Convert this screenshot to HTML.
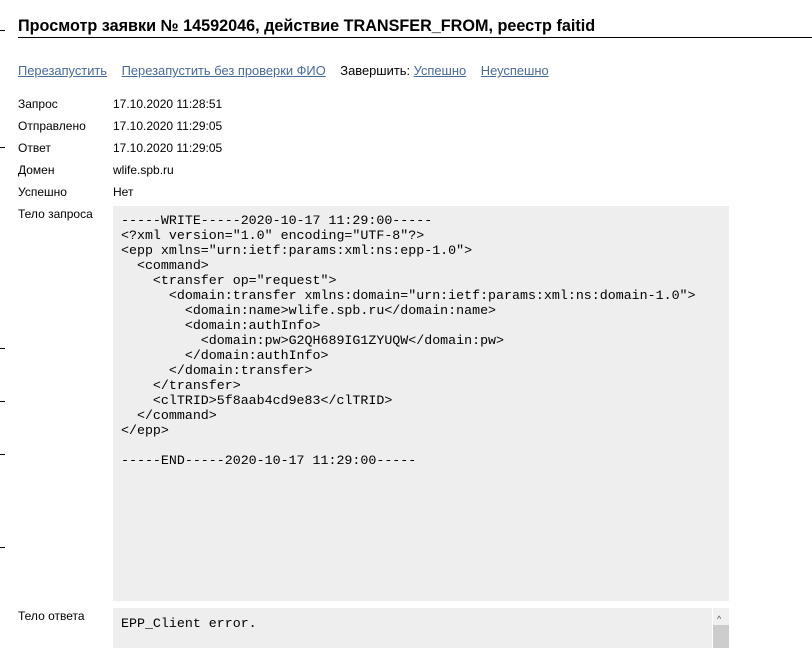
<!DOCTYPE html>
<html><head><meta charset="utf-8"><style>
body{margin:0;width:812px;height:635px;overflow:hidden;background:#fff;font-family:"Liberation Sans",Arial,sans-serif;font-size:12px;color:#000;position:relative}
.t{position:absolute;left:0;width:5px;height:1px;background:#000}
h1{position:absolute;left:18px;top:17px;margin:0;font-size:16.2px;font-weight:bold;white-space:nowrap}
.line{position:absolute;left:18px;right:0;top:37px;height:1px;background:#000}
.links{position:absolute;left:18px;top:63px;font-size:12.9px;white-space:nowrap}
.links a{color:#4a6a9a;text-decoration:underline;margin-right:11px}
.lab{position:absolute;left:18px;font-size:12px}
.val{position:absolute;left:113px;font-size:12px}
.box{position:absolute;left:113px;width:616px;background:#eeeeee}
pre{margin:0;font-family:"Liberation Mono",monospace;font-size:13.3px;line-height:15px;color:#000}
</style></head><body>
<div class="t" style="top:30px"></div>
<div class="t" style="top:147px"></div>
<div class="t" style="top:348px"></div>
<div class="t" style="top:401px"></div>
<div class="t" style="top:454px"></div>
<div class="t" style="top:547px"></div>
<h1>Просмотр заявки № 14592046, действие TRANSFER_FROM, реестр faitid</h1>
<div class="line"></div>
<div class="links"><a>Перезапустить</a> <a>Перезапустить без проверки ФИО</a> Завершить: <a>Успешно</a> <a>Неуспешно</a></div>
<div class="lab" style="top:97px">Запрос</div><div class="val" style="top:97px">17.10.2020 11:28:51</div>
<div class="lab" style="top:119px">Отправлено</div><div class="val" style="top:119px">17.10.2020 11:29:05</div>
<div class="lab" style="top:141px">Ответ</div><div class="val" style="top:141px">17.10.2020 11:29:05</div>
<div class="lab" style="top:163px">Домен</div><div class="val" style="top:163px">wlife.spb.ru</div>
<div class="lab" style="top:185px">Успешно</div><div class="val" style="top:185px">Нет</div>
<div class="lab" style="top:207px">Тело запроса</div>
<div class="box" style="top:206px;height:395px"><pre style="padding:7px 0 0 8px">-----WRITE-----2020-10-17 11:29:00-----
&lt;?xml version="1.0" encoding="UTF-8"?&gt;
&lt;epp xmlns="urn:ietf:params:xml:ns:epp-1.0"&gt;
  &lt;command&gt;
    &lt;transfer op="request"&gt;
      &lt;domain:transfer xmlns:domain="urn:ietf:params:xml:ns:domain-1.0"&gt;
        &lt;domain:name&gt;wlife.spb.ru&lt;/domain:name&gt;
        &lt;domain:authInfo&gt;
          &lt;domain:pw&gt;G2QH689IG1ZYUQW&lt;/domain:pw&gt;
        &lt;/domain:authInfo&gt;
      &lt;/domain:transfer&gt;
    &lt;/transfer&gt;
    &lt;clTRID&gt;5f8aab4cd9e83&lt;/clTRID&gt;
  &lt;/command&gt;
&lt;/epp&gt;

-----END-----2020-10-17 11:29:00-----</pre></div>
<div class="lab" style="top:609px">Тело ответа</div>
<div class="box" style="top:608px;height:40px"><pre style="padding:8px 0 0 8px">EPP_Client error.</pre>
<div style="position:absolute;right:0;top:0;width:16px;height:40px;background:#f0f0f0;border-left:1px solid #fff"><div style="position:absolute;left:4px;top:6px;font-size:9px;color:#555">&#94;</div><div style="position:absolute;left:0;top:17px;width:16px;height:23px;background:#cdcdcd"></div></div></div>
</body></html>
